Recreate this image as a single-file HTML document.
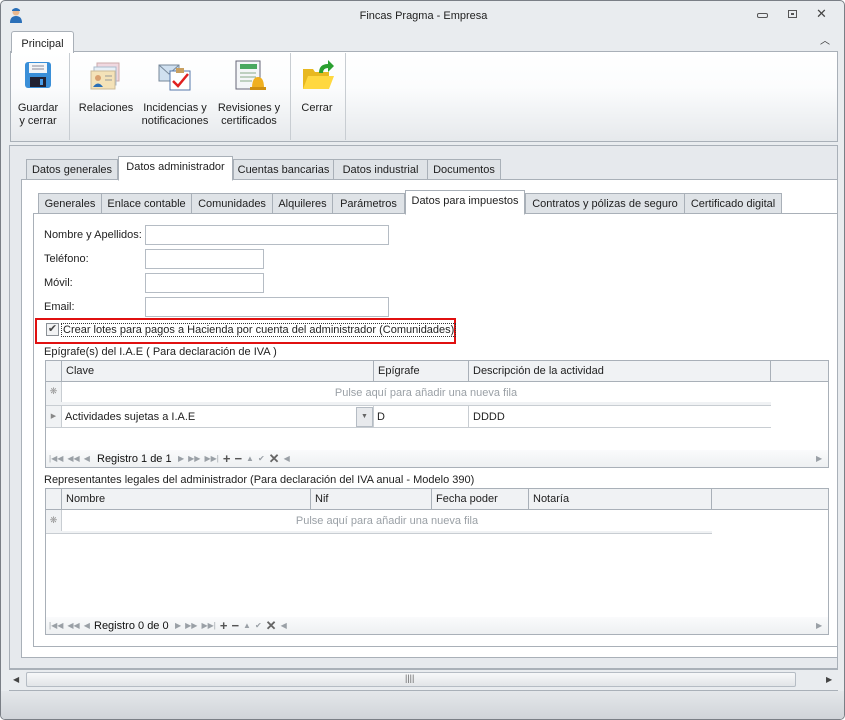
<!DOCTYPE html>
<html><head><meta charset="utf-8"><style>
*{box-sizing:border-box;margin:0;padding:0}
body{width:845px;height:720px;overflow:hidden;font:11px "Liberation Sans",sans-serif;color:#1e1e1e;background:#fff}
.a{position:absolute}
.win{left:0;top:0;width:845px;height:720px;border:1px solid #7a7f86;border-radius:5px;background:#e9ecef;overflow:hidden}
.tab{position:absolute;height:21px;border:1px solid #a9b0b8;background:#dfe3e7;padding-top:4px;text-align:center;white-space:nowrap}
.tab.sel{background:#fff;border-bottom-color:#fff;height:25px;padding-top:4px}
.inp{position:absolute;border:1px solid #b5bcc4;background:#fff;height:20px}
.lbl{position:absolute;white-space:nowrap}
.hd{position:absolute;background:#f0f2f4;border-right:1px solid #a9b0b8;border-bottom:1px solid #a9b0b8;height:21px;padding:4px 0 0 4px;white-space:nowrap}
.nav{position:absolute;color:#9aa0a6;font-size:8px;white-space:nowrap;display:flex;align-items:center;height:14px;gap:4px;line-height:14px}
.nav b{font-size:13px;font-weight:bold}
.btn{position:absolute;text-align:center;white-space:nowrap;line-height:13px}
</style></head><body>
<div class="a win">
 <div class="a" style="left:8px;top:6px;width:14px;height:16px"><svg width="14" height="16"><circle cx="7" cy="5" r="3.5" fill="#e8b890"/><path d="M3 3 Q7 -1 11 3 L11 4 L3 4Z" fill="#2a6fb8"/><path d="M1 16 Q1 9 7 9 Q13 9 13 16Z" fill="#2a6fb8"/></svg></div>
 <div class="lbl" style="left:0;width:845px;text-align:center;top:9px">Fincas Pragma - Empresa</div>
 <div class="a" style="left:756px;top:12px;width:11px;height:5px;border:1px solid #555;border-radius:2px"></div>
 <div class="a" style="left:787px;top:9px;width:9px;height:8px;border:1px solid #555"><div style="margin:2px;width:3px;height:2px;border:1px solid #555"></div></div>
 <div class="lbl" style="left:815px;top:5px;font-size:13px;color:#444">✕</div>
 <div class="lbl" style="left:819px;top:31px;font-size:10px;color:#333">︿</div>
 <div class="a" style="left:9px;top:50px;width:828px;height:91px;border:1px solid #a9b0b8;background:linear-gradient(#fff,#fbfcfd 40%,#e6e9ec)"></div>
 <div class="a" style="left:10px;top:30px;width:63px;height:22px;border:1px solid #a9b0b8;border-bottom:none;background:#fff;border-radius:3px 3px 0 0;text-align:center;padding-top:6px">Principal</div>
 <div class="a" style="left:68px;top:52px;width:1px;height:87px;background:#c8cdd2"></div>
 <div class="a" style="left:289px;top:52px;width:1px;height:87px;background:#c8cdd2"></div>
 <div class="a" style="left:344px;top:52px;width:1px;height:87px;background:#c8cdd2"></div>
 <svg class="a" style="left:23px;top:60px" width="28" height="28"><rect x="1" y="1" width="26" height="26" rx="3" fill="#3a8fd8"/><rect x="5" y="2" width="18" height="10" fill="#f4f6f8"/><line x1="8" y1="5" x2="20" y2="5" stroke="#889"/><line x1="8" y1="8" x2="20" y2="8" stroke="#889"/><rect x="6" y="16" width="16" height="10" fill="#223"/><rect x="16" y="18" width="3" height="6" fill="#4a9ee8"/></svg>
 <svg class="a" style="left:89px;top:60px" width="32" height="30"><rect x="7" y="2" width="22" height="18" fill="#f0d8e0" stroke="#caa"/><rect x="4" y="6" width="22" height="18" fill="#e8f0f8" stroke="#abc"/><rect x="1" y="10" width="24" height="18" fill="#f4e2b8" stroke="#cb9"/><circle cx="8" cy="17" r="3" fill="#d9a070"/><path d="M3 26 Q8 19 13 26Z" fill="#2a6fb8"/><line x1="15" y1="15" x2="22" y2="15" stroke="#999"/><line x1="15" y1="19" x2="22" y2="19" stroke="#999"/></svg>
 <svg class="a" style="left:157px;top:60px" width="34" height="30"><rect x="1" y="4" width="20" height="16" fill="#cfe0f0" stroke="#789"/><path d="M1 4 L11 13 L21 4" fill="none" stroke="#789"/><rect x="12" y="10" width="20" height="19" fill="#fff" stroke="#57a"/><rect x="18" y="7" width="8" height="5" fill="#c9a060"/><path d="M15 20 L20 25 L30 13" fill="none" stroke="#e02020" stroke-width="2.5"/></svg>
 <svg class="a" style="left:233px;top:58px" width="32" height="32"><rect x="2" y="2" width="24" height="28" fill="#f4f6f8" stroke="#667"/><rect x="6" y="5" width="17" height="5" fill="#4aa860"/><line x1="6" y1="14" x2="22" y2="14" stroke="#8a8"/><line x1="6" y1="18" x2="22" y2="18" stroke="#8a8"/><line x1="6" y1="22" x2="18" y2="22" stroke="#8a8"/><path d="M18 29 Q18 18 24 18 Q30 18 30 29Z" fill="#f0b020"/><rect x="16" y="28" width="16" height="3" fill="#d09010"/></svg>
 <svg class="a" style="left:300px;top:58px" width="34" height="32"><path d="M2 10 L12 10 L14 13 L28 13 L28 30 L2 30Z" fill="#e8b820"/><path d="M2 30 L7 17 L33 17 L28 30Z" fill="#ffd840"/><path d="M18 14 Q18 5 27 5 L27 1 L33 7 L27 13 L27 9 Q22 9 22 14Z" fill="#2aa030"/></svg>
 <div class="btn" style="left:12px;top:95px;width:50px;padding-top:6px">Guardar<br>y cerrar</div>
 <div class="btn" style="left:76px;top:95px;width:58px;padding-top:6px">Relaciones</div>
 <div class="btn" style="left:139px;top:95px;width:70px;padding-top:6px">Incidencias y<br>notificaciones</div>
 <div class="btn" style="left:214px;top:95px;width:68px;padding-top:6px">Revisiones y<br>certificados</div>
 <div class="btn" style="left:295px;top:95px;width:42px;padding-top:6px">Cerrar</div>
 <div class="a" style="left:8px;top:144px;width:829px;height:524px;border:1px solid #a9b0b8;background:#e6e9ed"></div>
 <div class="a" style="left:20px;top:178px;width:817px;height:479px;border:1px solid #a9b0b8;background:#fff"></div>
 <div class="tab" style="left:25px;top:158px;width:92px">Datos generales</div>
 <div class="tab" style="left:232px;top:158px;width:101px">Cuentas bancarias</div>
 <div class="tab" style="left:332px;top:158px;width:95px">Datos industrial</div>
 <div class="tab" style="left:426px;top:158px;width:74px">Documentos</div>
 <div class="tab sel" style="left:117px;top:155px;width:115px">Datos administrador</div>
 <div class="a" style="left:32px;top:212px;width:805px;height:434px;border:1px solid #a9b0b8;background:#fff"></div>
 <div class="tab" style="left:37px;top:192px;width:64px">Generales</div>
 <div class="tab" style="left:100px;top:192px;width:91px">Enlace contable</div>
 <div class="tab" style="left:190px;top:192px;width:82px">Comunidades</div>
 <div class="tab" style="left:271px;top:192px;width:61px">Alquileres</div>
 <div class="tab" style="left:331px;top:192px;width:73px">Parámetros</div>
 <div class="tab" style="left:524px;top:192px;width:160px">Contratos y pólizas de seguro</div>
 <div class="tab" style="left:683px;top:192px;width:98px">Certificado digital</div>
 <div class="tab sel" style="left:404px;top:189px;width:120px">Datos para impuestos</div>
 <div class="lbl" style="left:43px;top:228px">Nombre y Apellidos:</div><div class="inp" style="left:144px;top:224px;width:244px"></div>
 <div class="lbl" style="left:43px;top:252px">Teléfono:</div><div class="inp" style="left:144px;top:248px;width:119px"></div>
 <div class="lbl" style="left:43px;top:276px">Móvil:</div><div class="inp" style="left:144px;top:272px;width:119px"></div>
 <div class="lbl" style="left:43px;top:300px">Email:</div><div class="inp" style="left:144px;top:296px;width:244px"></div>
 <div class="a" style="left:34px;top:317px;width:421px;height:26px;border:2px solid #e01010"></div>
 <div class="a" style="left:45px;top:322px;width:13px;height:13px;border:1px solid #8a9096;background:#f2f3f4;font-size:11px;line-height:11px;text-align:center;color:#444">✔</div>
 <div class="lbl" style="left:60px;top:322px;border:1px dotted #333;padding:0 1px;line-height:12px">Crear lotes para pagos a Hacienda por cuenta del administrador (Comunidades)</div>
 <div class="lbl" style="left:43px;top:345px">Epígrafe(s) del I.A.E ( Para declaración de IVA )</div>
 <div class="a" style="left:44px;top:359px;width:784px;height:108px;border:1px solid #a9b0b8;background:#fff"></div>
 <div class="hd" style="left:45px;top:360px;width:16px"></div>
 <div class="hd" style="left:61px;top:360px;width:312px">Clave</div>
 <div class="hd" style="left:373px;top:360px;width:95px">Epígrafe</div>
 <div class="hd" style="left:468px;top:360px;width:302px">Descripción de la actividad</div>
 <div class="hd" style="left:770px;top:360px;width:57px;border-right:none"></div>
 <div class="a" style="left:45px;top:381px;width:16px;height:20px;border-right:1px solid #c8cdd2;background:#f0f2f4;color:#999;text-align:center;font-size:9px;padding-top:4px">❋</div>
 <div class="lbl" style="left:61px;top:386px;width:728px;text-align:center;color:#9aa0a6">Pulse aquí para añadir una nueva fila</div>
 <div class="a" style="left:45px;top:401px;width:725px;height:4px;background:#f0f2f4;border-bottom:1px solid #c8cdd2"></div>
 <div class="a" style="left:45px;top:405px;width:725px;height:22px;border-bottom:1px solid #c8cdd2"></div>
 <div class="a" style="left:45px;top:405px;width:16px;height:21px;background:#f0f2f4;border-right:1px solid #c8cdd2;color:#888;font-size:7px;text-align:center;padding-top:6px">▶</div>
 <div class="lbl" style="left:64px;top:410px">Actividades sujetas a I.A.E</div>
 <div class="a" style="left:355px;top:406px;width:17px;height:20px;background:#e8eaed;border:1px solid #b5bcc4;color:#666;font-size:7px;text-align:center;padding-top:5px">▼</div>
 <div class="a" style="left:372px;top:405px;width:1px;height:21px;background:#c8cdd2"></div>
 <div class="a" style="left:467px;top:405px;width:1px;height:21px;background:#c8cdd2"></div>
 <div class="lbl" style="left:376px;top:410px">D</div>
 <div class="lbl" style="left:472px;top:410px">DDDD</div>
 <div class="a" style="left:45px;top:449px;width:782px;height:17px;background:linear-gradient(#fafbfc,#eef0f2)"></div>
 <div class="nav" style="left:48px;top:451px"><span>|◀◀</span><span>◀◀</span><span>◀</span></div>
 <div class="lbl" style="left:96px;top:452px;color:#111">Registro 1 de 1</div>
 <div class="nav" style="left:177px;top:451px"><span>▶</span><span>▶▶</span><span>▶▶|</span><b style="color:#555">+</b><b style="color:#555">−</b><span>▲</span><span>✔</span><b style="color:#666">✕</b><span>◀</span></div>
 <div class="nav" style="left:815px;top:451px">▶</div>
 <div class="lbl" style="left:43px;top:473px">Representantes legales del administrador (Para declaración del IVA anual - Modelo 390)</div>
 <div class="a" style="left:44px;top:487px;width:784px;height:147px;border:1px solid #a9b0b8;background:#fff"></div>
 <div class="hd" style="left:45px;top:488px;width:16px"></div>
 <div class="hd" style="left:61px;top:488px;width:249px">Nombre</div>
 <div class="hd" style="left:310px;top:488px;width:121px">Nif</div>
 <div class="hd" style="left:431px;top:488px;width:97px">Fecha poder</div>
 <div class="hd" style="left:528px;top:488px;width:183px">Notaría</div>
 <div class="hd" style="left:711px;top:488px;width:116px;border-right:none"></div>
 <div class="a" style="left:45px;top:509px;width:16px;height:22px;border-right:1px solid #c8cdd2;background:#f0f2f4;color:#999;text-align:center;font-size:9px;padding-top:5px">❋</div>
 <div class="lbl" style="left:61px;top:514px;width:650px;text-align:center;color:#9aa0a6">Pulse aquí para añadir una nueva fila</div>
 <div class="a" style="left:45px;top:530px;width:666px;height:3px;background:#f0f2f4;border-bottom:1px solid #c8cdd2"></div>
 <div class="a" style="left:45px;top:616px;width:782px;height:17px;background:linear-gradient(#fafbfc,#eef0f2)"></div>
 <div class="nav" style="left:48px;top:618px"><span>|◀◀</span><span>◀◀</span><span>◀</span></div>
 <div class="lbl" style="left:93px;top:619px;color:#111">Registro 0 de 0</div>
 <div class="nav" style="left:174px;top:618px"><span>▶</span><span>▶▶</span><span>▶▶|</span><b style="color:#555">+</b><b style="color:#555">−</b><span>▲</span><span>✔</span><b style="color:#666">✕</b><span>◀</span></div>
 <div class="nav" style="left:815px;top:618px">▶</div>
 <div class="a" style="left:8px;top:668px;width:829px;height:21px;background:#e9ecef;border-top:1px solid #a9b0b8"></div>
 <div class="nav" style="left:12px;top:672px;color:#444">◀</div>
 <div class="a" style="left:25px;top:671px;width:770px;height:15px;border:1px solid #b5bcc4;border-radius:2px;background:linear-gradient(#f7f8f9,#e2e5e8)"></div>
 <div class="lbl" style="left:404px;top:672px;font-size:9px;color:#666">||||</div>
 <div class="nav" style="left:825px;top:672px;color:#444">▶</div>
 <div class="a" style="left:8px;top:689px;width:829px;height:1px;background:#a9b0b8"></div>
 <div class="a" style="left:0;top:690px;width:845px;height:30px;background:linear-gradient(#e4e7ea,#cfd3d8)"></div>
</div>
</body></html>
